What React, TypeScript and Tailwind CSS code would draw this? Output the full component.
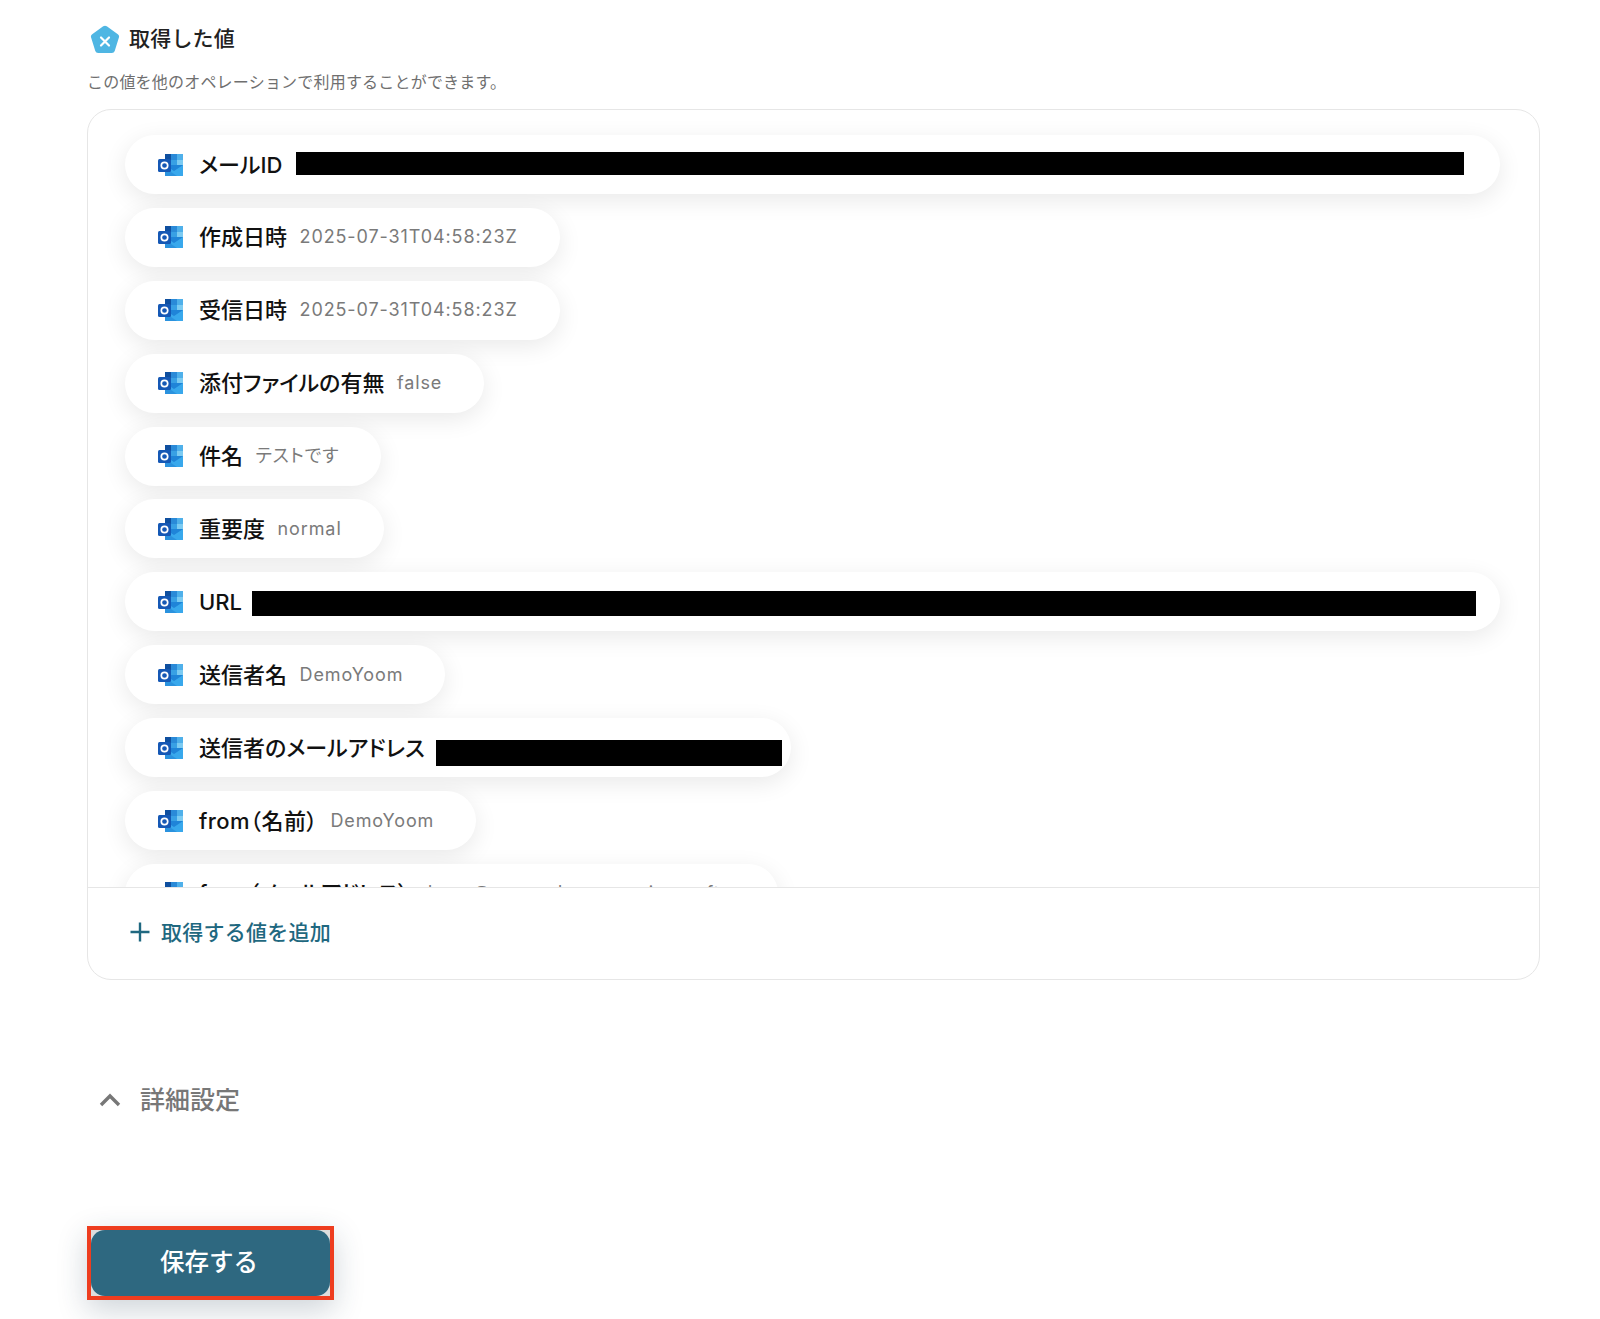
import React from "react";

const font = { fontFamily: '"Inter","Noto Sans CJK JP","Noto Sans",sans-serif' };

function OutlookIcon() {
  return (
    <svg width="26" height="24" viewBox="0 0 26 24" className="shrink-0">
      <rect x="7" y="1" width="18" height="13" rx="1" fill="#1a66c2" />
      <rect x="7" y="1" width="6" height="6" fill="#0f4f9f" />
      <rect x="13" y="1" width="6" height="6" fill="#2a8ad8" />
      <rect x="19" y="1" width="6" height="6" fill="#4fb0ea" />
      <rect x="13" y="7" width="6" height="6" fill="#38a0e4" />
      <rect x="19" y="7" width="6" height="6" fill="#7ccbf2" />
      <path d="M7 12 H25 V22 a1 1 0 0 1 -1 1 H8 a1 1 0 0 1 -1 -1 Z" fill="#1f84d8" />
      <path d="M7 12 L16 18 L25 12 V22 a1 1 0 0 1 -1 1 H8 a1 1 0 0 1 -1 -1 Z" fill="#38a8ec" />
      <path d="M7 23 V15 L19 23 Z" fill="#1f7fd4" opacity="0.55" />
      <rect x="0" y="6" width="13" height="13" rx="1.5" fill="#1558b5" />
      <circle cx="6.5" cy="12.5" r="3.2" fill="none" stroke="#fff" strokeWidth="1.7" />
    </svg>
  );
}

function Pill({ label, value, bar, full, barClass, labelClass }: { label: string; value?: string; bar?: boolean; full?: boolean; barClass?: string; labelClass?: string }) {
  return (
    <div className={`flex h-[59px] shrink-0 items-center rounded-full bg-white pl-[33px] shadow-[0_6px_24px_rgba(0,0,0,0.09)] [font-feature-settings:'palt'] ${full ? "w-full" : "pr-[42px]"}`}>
      <OutlookIcon />
      <span className={`ml-[15px] whitespace-nowrap text-[22px] font-medium leading-none text-[#111] ${labelClass ?? ""}`}>{label}</span>
      {value && <span className="ml-[12.5px] whitespace-nowrap text-[18px] leading-none tracking-[0.05em] text-[#7a7a7a]">{value}</span>}
      {bar && <div className={`bg-black ${barClass ?? ""}`} />}
    </div>
  );
}

export default function App() {
  return (
    <div className="min-h-[1319px] bg-white pl-[87px] pr-[60px] pt-[25px]" style={font}>
      <div className="flex h-[30px] items-center pl-[3px]">
        <svg width="30" height="30" viewBox="0 0 30 30" className="shrink-0">
          <path d="M13.2 1.3 a3 3 0 0 1 3.6 0 L27.8 9.2 a3 3 0 0 1 1.1 3.4 L24.7 26 a3 3 0 0 1 -2.9 2.1 H8.2 A3 3 0 0 1 5.3 26 L1.1 12.6 a3 3 0 0 1 1.1 -3.4 Z" fill="#4fb6e3" />
          <path d="M11 12.5 L19 20.5 M19 12.5 L11 20.5" stroke="#fff" strokeWidth="2.2" strokeLinecap="round" />
        </svg>
        <span className="-mt-[3px] ml-[9px] text-[21px] font-medium leading-none tracking-[0.2px] text-[#222]">取得した値</span>
      </div>
      <p className="mt-[17px] text-[16px] leading-[20px] tracking-[0.2px] text-[#6f6f6f]">この値を他のオペレーションで利用することができます。</p>
      <div className="mt-[17px] h-[871px] overflow-hidden rounded-[24px] border border-[#e6e6e6]">
        <div className="h-[777px] overflow-hidden">
          <div className="flex flex-col items-start gap-[13.9px] pl-[37px] pr-[39px] pt-[25px]">
            <Pill label="メールID" bar full barClass="-mt-[2px] ml-[14px] h-[23px] w-[1168px]" />
            <Pill label="作成日時" value="2025-07-31T04:58:23Z" />
            <Pill label="受信日時" value="2025-07-31T04:58:23Z" />
            <Pill label="添付ファイルの有無" value="false" />
            <Pill label="件名" value="テストです" />
            <Pill label="重要度" value="normal" />
            <Pill label="URL" bar full barClass="mt-[3px] ml-[10px] h-[25px] w-[1224px]" />
            <Pill label="送信者名" value="DemoYoom" />
            <div className="flex h-[59px] w-[666px] shrink-0 items-center rounded-full bg-white pl-[33px] shadow-[0_6px_24px_rgba(0,0,0,0.09)] [font-feature-settings:'palt']">
              <OutlookIcon />
              <span className="ml-[15px] whitespace-nowrap text-[22px] font-medium leading-none text-[#111]">送信者のメールアドレス</span>
              <div className="ml-[11px] mt-[10px] h-[26px] w-[346px] bg-black" />
            </div>
            <Pill label="from（名前）" value="DemoYoom" labelClass="tracking-[0.45px]" />
            <div className="flex h-[59px] w-[653px] shrink-0 items-center overflow-hidden rounded-full bg-white pl-[33px] shadow-[0_6px_24px_rgba(0,0,0,0.09)] [font-feature-settings:'palt']">
              <OutlookIcon />
              <span className="ml-[15px] whitespace-nowrap text-[22px] font-medium leading-none text-[#111]">from（メールアドレス）</span>
              <span className="ml-[12.5px] whitespace-nowrap text-[18px] leading-none tracking-[0.05em] text-[#7a7a7a]">demo@yoom-demo.onmicrosoft.com</span>
            </div>
          </div>
        </div>
        <div className="flex h-[92px] items-center border-t border-[#e6e6e6] pb-[3px] pl-[42px] text-[#1f6880]">
          <svg width="20" height="20" viewBox="0 0 20 20" fill="none" stroke="currentColor" strokeWidth="2.4" className="shrink-0">
            <path d="M10 0.5 V19.5 M0.5 10 H19.5" />
          </svg>
          <span className="ml-[11px] text-[21px] font-medium leading-none tracking-[0.25px]">取得する値を追加</span>
        </div>
      </div>
      <div className="mt-[105px] flex h-[30px] items-center pl-[12px] text-[#777]">
        <svg width="22" height="14" viewBox="0 0 22 14" fill="none" stroke="currentColor" strokeWidth="3.4" className="shrink-0">
          <path d="M2 12 L11 3 L20 12" />
        </svg>
        <span className="ml-[19px] text-[25px] font-medium leading-none">詳細設定</span>
      </div>
      <div className="mt-[111px] h-[74px] w-[247px] border-4 border-[#ee3d1f] bg-[#ddd] shadow-[0_10px_30px_rgba(30,60,80,0.22)]">
        <button className="h-full w-full rounded-[14px] bg-[#2e6880] pb-[1px] pr-[3px] text-[24.5px] font-medium text-white">保存する</button>
      </div>
    </div>
  );
}
